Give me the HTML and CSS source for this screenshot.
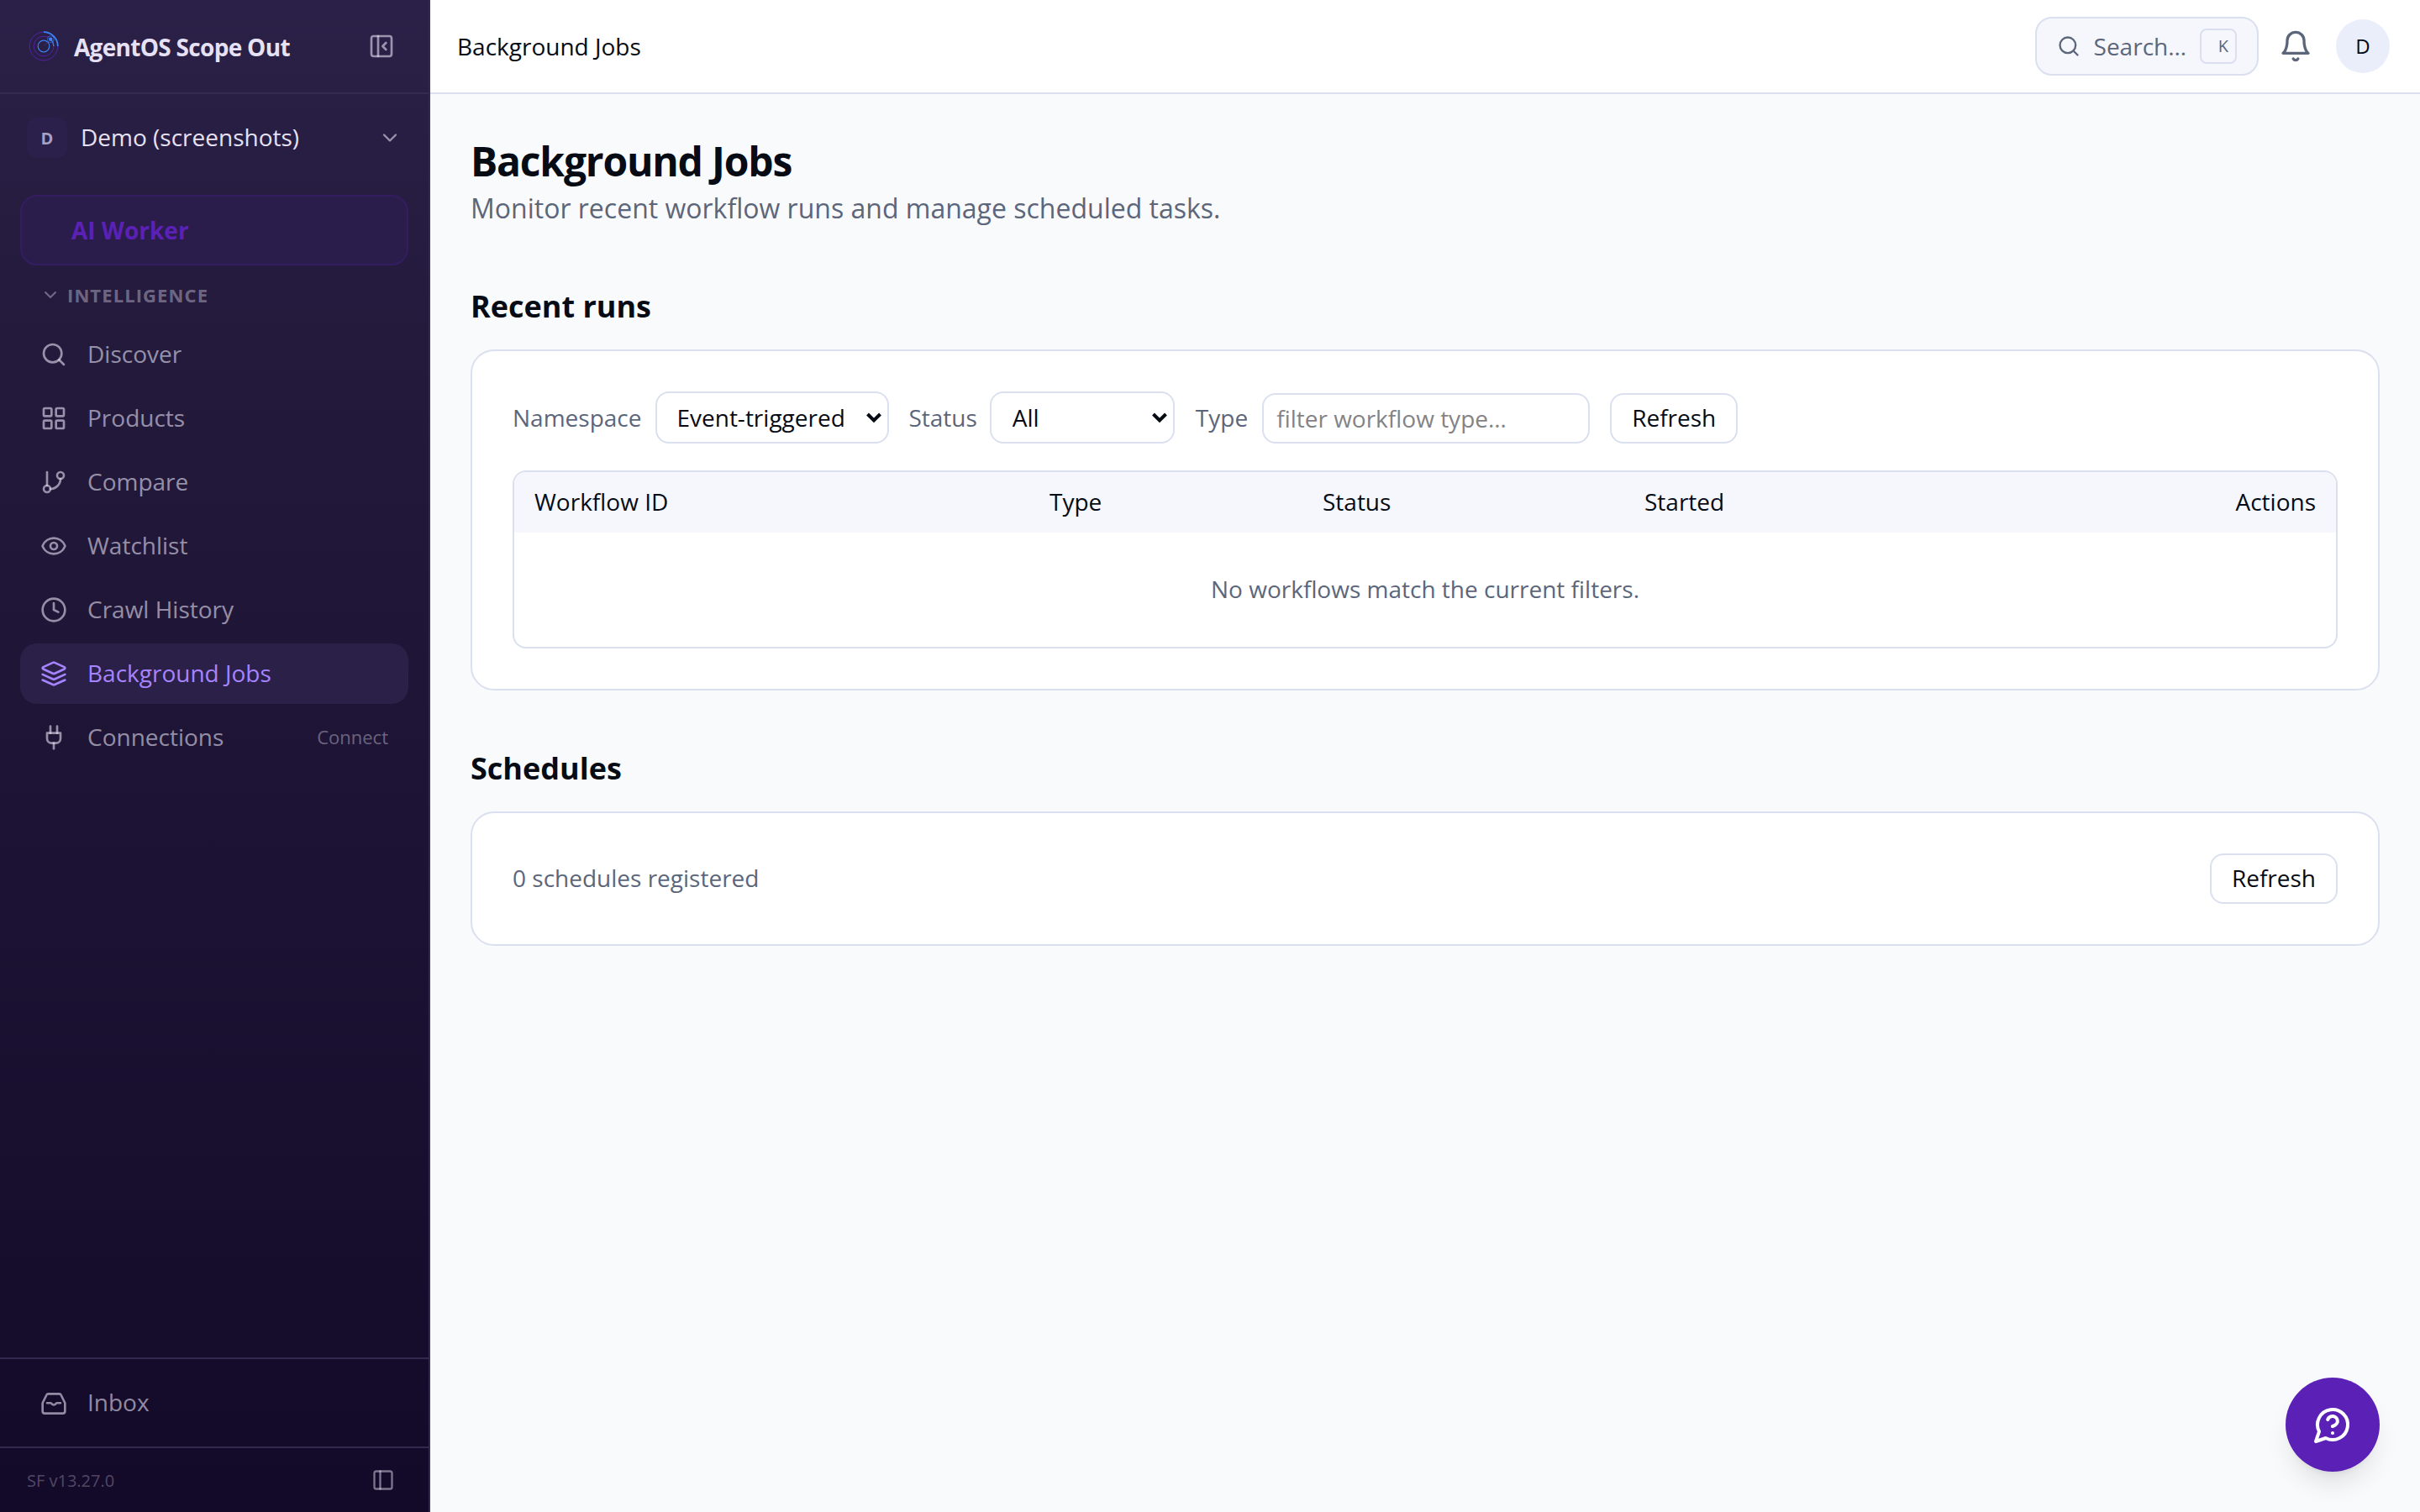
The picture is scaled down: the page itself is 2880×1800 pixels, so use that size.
FILE: index.html
```html
<!DOCTYPE html>
<html lang="en">
<head>
    <meta charset="UTF-8">
    <meta name="viewport" content="width=device-width, initial-scale=1.0">
    <title>Background Jobs</title>
    <link rel="stylesheet" href="styles.css">
</head>
<body>
    <aside class="sidebar">
        <div class="brand">
            <svg class="brand-logo" viewBox="0 0 40 40" fill="none">
                <circle cx="20" cy="20" r="16.8" stroke="#5b21b6" stroke-opacity=".85" />
                <circle cx="20" cy="20" r="11.8" stroke="#5b21b6" stroke-opacity=".85" />
                <circle cx="20" cy="20" r="6.8" stroke="#3b82f6" stroke-width="1.2" />
                <path d="M20 3.2A16.8 16.8 0 0 1 36.8 20" stroke="#3b82f6" stroke-width="1.8" />
                <path d="M28.3 11.7A11.8 11.8 0 0 1 31.8 20" stroke="#3b82f6" stroke-width="1.2" />
                <path d="M21 19l5-5" stroke="#5b21b6" stroke-dasharray="2 1" />
                <circle cx="28.3" cy="11.7" r="4" stroke="#3b82f6" stroke-opacity=".6" />
                <circle cx="28.3" cy="11.7" r="2.2" fill="#3b82f6" />
            </svg>
            <span class="brand-name">AgentOS Scope Out</span>
            <svg class="icon brand-toggle" viewBox="0 0 24 24"><rect x="3" y="3" width="18" height="18" rx="2" /><path d="M9 3v18" /><path d="m16 15-3-3 3-3" /></svg>
        </div>

        <div class="team">
            <span class="team-badge">D</span>
            <span class="team-name">Demo (screenshots)</span>
            <svg class="icon icon-sm" viewBox="0 0 24 24"><path d="m6 9 6 6 6-6" /></svg>
        </div>

        <a class="worker">AI Worker</a>

        <div class="section-title">
            <svg class="icon" viewBox="0 0 24 24"><path d="m6 9 6 6 6-6" /></svg>
            <span>INTELLIGENCE</span>
        </div>

        <nav class="nav">
            <a class="nav-item">
                <svg class="icon" viewBox="0 0 24 24"><circle cx="11" cy="11" r="8" /><path d="m21 21-4.3-4.3" /></svg>
                <span>Discover</span>
            </a>
            <a class="nav-item">
                <svg class="icon" viewBox="0 0 24 24"><rect x="3" y="3" width="7" height="7" rx="1" /><rect x="14" y="3" width="7" height="7" rx="1" /><rect x="14" y="14" width="7" height="7" rx="1" /><rect x="3" y="14" width="7" height="7" rx="1" /></svg>
                <span>Products</span>
            </a>
            <a class="nav-item">
                <svg class="icon" viewBox="0 0 24 24"><path d="M6 3v12" /><circle cx="18" cy="6" r="3" /><circle cx="6" cy="18" r="3" /><path d="M18 9a9 9 0 0 1-9 9" /></svg>
                <span>Compare</span>
            </a>
            <a class="nav-item">
                <svg class="icon" viewBox="0 0 24 24"><path d="M2.062 12.348a1 1 0 0 1 0-.696 10.75 10.75 0 0 1 19.876 0 1 1 0 0 1 0 .696 10.75 10.75 0 0 1-19.876 0" /><circle cx="12" cy="12" r="3" /></svg>
                <span>Watchlist</span>
            </a>
            <a class="nav-item">
                <svg class="icon" viewBox="0 0 24 24"><circle cx="12" cy="12" r="10" /><path d="M12 6v6l4 2" /></svg>
                <span>Crawl History</span>
            </a>
            <a class="nav-item active">
                <svg class="icon" viewBox="0 0 24 24"><path d="m12.83 2.18a2 2 0 0 0-1.66 0L2.6 6.08a1 1 0 0 0 0 1.83l8.58 3.91a2 2 0 0 0 1.66 0l8.58-3.9a1 1 0 0 0 0-1.83Z" /><path d="m22 17.65-9.17 4.16a2 2 0 0 1-1.66 0L2 17.65" /><path d="m22 12.65-9.17 4.16a2 2 0 0 1-1.66 0L2 12.65" /></svg>
                <span>Background Jobs</span>
            </a>
            <a class="nav-item">
                <svg class="icon" viewBox="0 0 24 24"><path d="M12 22v-5" /><path d="M9 8V2" /><path d="M15 8V2" /><path d="M18 8v5a4 4 0 0 1-4 4h-4a4 4 0 0 1-4-4V8Z" /></svg>
                <span>Connections</span>
                <span class="nav-hint">Connect</span>
            </a>
        </nav>

        <div class="inbox">
            <a class="nav-item">
                <svg class="icon" viewBox="0 0 24 24"><path d="M7 4h10a1.5 1.5 0 0 1 1.4.9L22 12.2v7.3a2 2 0 0 1-2 2H4a2 2 0 0 1-2-2v-7.3L5.6 4.9A1.5 1.5 0 0 1 7 4Z" /><path d="M6 12.2h3.200c.6 0 .8.3 1.100.8.400.6.900.9 1.700.9s1.300-.3 1.700-.9c.3-.5.500-.8 1.100-.8H18" /></svg>
                <span>Inbox</span>
            </a>
        </div>

        <div class="sidebar-footer">
            <span>SF v13.27.0</span>
            <svg class="icon icon-sm" viewBox="0 0 24 24"><rect x="3" y="3" width="18" height="18" rx="2" /><path d="M9 3v18" /></svg>
        </div>
    </aside>

    <div class="page">
        <header class="topbar">
            <span class="topbar-title">Background Jobs</span>
            <div class="search">
                <svg class="icon icon-sm" viewBox="0 0 24 24"><circle cx="11" cy="11" r="8" /><path d="m21 21-4.3-4.3" /></svg>
                <span>Search…</span>
                <kbd>K</kbd>
            </div>
            <svg class="icon bell" viewBox="0 0 24 24"><path d="M6 8a6 6 0 0 1 12 0c0 7 3 9 3 9H3s3-2 3-9" /><path d="M10.3 21a1.94 1.94 0 0 0 3.4 0" /></svg>
            <span class="avatar">D</span>
        </header>

        <main class="content">
            <h1>Background Jobs</h1>
            <p class="subtitle">Monitor recent workflow runs and manage scheduled tasks.</p>

            <h2>Recent runs</h2>
            <section class="card">
                <form class="filters">
                    <label for="namespace" class="label-namespace">Namespace</label>
                    <div class="select select-namespace">
                        <select id="namespace"><option>Event-triggered</option></select>
                        <svg viewBox="0 0 20 14"><path d="M2.5 3 10 10.5 17.5 3" /></svg>
                    </div>
                    <label for="status" class="label-status">Status</label>
                    <div class="select select-status">
                        <select id="status"><option>All</option></select>
                        <svg viewBox="0 0 20 14"><path d="M2.5 3 10 10.5 17.5 3" /></svg>
                    </div>
                    <label for="type">Type</label>
                    <input type="text" id="type" placeholder="filter workflow type…">
                    <button type="button" class="btn">Refresh</button>
                </form>

                <div class="table-wrap">
                    <table>
                        <thead>
                            <tr>
                                <th class="col-id">Workflow ID</th>
                                <th class="col-type">Type</th>
                                <th class="col-status">Status</th>
                                <th class="col-started">Started</th>
                                <th class="col-actions">Actions</th>
                            </tr>
                        </thead>
                        <tbody>
                            <tr>
                                <td colspan="5">No workflows match the current filters.</td>
                            </tr>
                        </tbody>
                    </table>
                </div>
            </section>

            <h2>Schedules</h2>
            <section class="card schedules">
                <span>0 schedules registered</span>
                <button type="button" class="btn">Refresh</button>
            </section>
        </main>
    </div>

    <button type="button" class="help">
        <svg class="icon" viewBox="0 0 24 24"><path d="M7.9 20A9 9 0 1 0 4 16.1L2 22Z" /><path d="M9.09 9a3 3 0 0 1 5.83 1c0 2-3 3-3 3" /><path d="M12 17h.01" /></svg>
    </button>
</body>
</html>
```
FILE: styles.css
```css
* {
    box-sizing: border-box;
}

body {
    margin: 0;
    height: 1800px;
    display: flex;
    font-family: "Open Sans", sans-serif;
    font-size: 28px;
    line-height: 40px;
    color: #060b14;
    background-color: #f9fafc;
    overflow: hidden;
}

.icon {
    width: 32px;
    height: 32px;
    flex-shrink: 0;
    fill: none;
    stroke: currentColor;
    stroke-width: 2;
    stroke-linecap: round;
    stroke-linejoin: round;
}

.icon-sm {
    width: 28px;
    height: 28px;
}

/* Sidebar */
.sidebar {
    width: 512px;
    flex-shrink: 0;
    display: flex;
    flex-direction: column;
    border-right: 2px solid #33294f;
    background: linear-gradient(180deg, #2b2148 0%, #231a3c 22%, #1e1435 50%, #130929 100%);
    color: rgba(230, 225, 244, 0.6);
}

.brand {
    height: 112px;
    padding: 0 40px 0 32px;
    display: flex;
    align-items: center;
    gap: 16px;
    border-bottom: 2px solid #342b50;
}

.brand-logo {
    width: 40px;
    height: 40px;
}

.brand-name {
    flex: 1;
    padding-top: 1px;
    font-weight: 700;
    letter-spacing: -0.025em;
    color: #e6e1f4;
}

.team {
    height: 104px;
    padding: 0 32px;
    display: flex;
    align-items: center;
    gap: 16px;
}

.team-badge {
    width: 48px;
    height: 48px;
    border-radius: 12px;
    background-color: #2b1f4b;
    font-size: 20px;
    font-weight: 700;
    line-height: 49px;
    text-align: center;
    color: #a8a1bf;
}

.team-name {
    flex: 1;
    padding-bottom: 2px;
    color: #e6e1f4;
}

.worker {
    height: 84px;
    margin: 16px 24px 0;
    padding-left: 59px;
    border: 2px solid #331d60;
    border-radius: 20px;
    background-color: #2b1d4b;
    font-weight: 700;
    line-height: 80px;
    color: #5b21b6;
}

.section-title {
    height: 70px;
    padding-left: 48px;
    display: flex;
    align-items: center;
    gap: 8px;
    font-size: 22px;
    font-weight: 700;
    letter-spacing: 0.05em;
    color: rgba(230, 225, 244, 0.4);
}

.section-title .icon {
    width: 24px;
    height: 24px;
}

.nav {
    flex: 1;
    padding: 0 24px;
    display: flex;
    flex-direction: column;
    gap: 4px;
}

.nav-item {
    height: 72px;
    padding: 0 24px;
    display: flex;
    align-items: center;
    gap: 24px;
    border-radius: 20px;
}

.nav-item span {
    padding-bottom: 2px;
}

.nav-item.active {
    background-color: #2b2048;
    color: #a684ff;
}

.nav-hint {
    margin-left: auto;
    font-size: 22px;
    color: rgba(230, 225, 244, 0.4);
}

.inbox {
    padding: 16px 24px;
    border-top: 2px solid #33294f;
}

.sidebar-footer {
    height: 78px;
    padding: 0 40px 0 32px;
    display: flex;
    align-items: center;
    justify-content: space-between;
    border-top: 2px solid #33294f;
    font-size: 20px;
    color: rgba(230, 225, 244, 0.3);
}

.sidebar-footer span {
    padding-top: 2px;
}

.sidebar-footer .icon {
    color: rgba(230, 225, 244, 0.5);
}

/* Top bar */
.page {
    flex: 1;
}

.topbar {
    height: 112px;
    padding: 0 36px 0 32px;
    display: flex;
    align-items: center;
    border-bottom: 2px solid #dae0ef;
    background-color: #fff;
}

.topbar-title {
    flex: 1;
}

.search {
    height: 70px;
    padding: 0 24px;
    display: flex;
    align-items: center;
    gap: 16px;
    border: 2px solid #dae0ef;
    border-radius: 20px;
    background-color: #f5f7fc;
    color: #5c667b;
}

.search kbd {
    width: 44px;
    height: 42px;
    padding-right: 8px;
    border: 2px solid #dae0ef;
    border-radius: 8px;
    font-family: inherit;
    font-size: 20px;
    line-height: 38px;
    text-align: right;
}

.bell {
    width: 40px;
    height: 40px;
    margin: 0 28px 0 24px;
    color: #5c667b;
}

.avatar {
    width: 64px;
    height: 64px;
    border-radius: 50%;
    background-color: #eaeefa;
    font-size: 24px;
    line-height: 64px;
    text-align: center;
}

/* Content */
.content {
    padding: 48px;
}

h1 {
    margin: 0;
    font-size: 48px;
    line-height: 64px;
    letter-spacing: -0.025em;
}

.subtitle {
    margin: 0;
    font-size: 32px;
    line-height: 48px;
    color: #5c667b;
}

h2 {
    margin: 65px 0 23px;
    font-size: 36px;
    line-height: 56px;
}

.card {
    padding: 48px;
    border: 2px solid #dae0ef;
    border-radius: 28px;
    background-color: #fff;
}

.filters {
    display: flex;
    align-items: flex-end;
    margin-bottom: 32px;
    color: #5c667b;
}

.filters label {
    margin-right: 17px;
    line-height: 62px;
}

.filters .label-status {
    margin-right: 15px;
}

.select {
    position: relative;
}

.select-namespace {
    width: 278px;
    margin-right: 23px;
}

.select-status {
    width: 220px;
    margin-right: 25px;
}

.select svg {
    position: absolute;
    right: 8px;
    top: 24px;
    width: 20px;
    height: 14px;
    fill: none;
    stroke: #060b14;
    stroke-width: 4;
}

select,
input,
.btn {
    margin: 0;
    border: 2px solid #dae0ef;
    border-radius: 16px;
    background-color: #fff;
    font-family: inherit;
    font-size: 28px;
    color: #060b14;
}

select {
    display: block;
    width: 100%;
    height: 62px;
    padding: 0 23px;
    appearance: none;
}

.select-status select {
    padding-left: 25px;
}

input {
    width: 390px;
    height: 60px;
    margin-right: 24px;
    padding: 0 15px 1px;
}

input::placeholder {
    color: #838387;
}

.btn {
    height: 60px;
    padding: 0 24px 2px;
}

.table-wrap {
    border: 2px solid #dae0ef;
    border-radius: 16px;
    overflow: hidden;
}

table {
    width: 100%;
    border-collapse: collapse;
    table-layout: fixed;
}

th {
    height: 72px;
    padding: 0 24px 2px;
    background-color: #f5f7fc;
    font-weight: 400;
    text-align: left;
}

.col-id {
    width: 613px;
}

.col-type {
    width: 325px;
}

.col-status {
    width: 383px;
}

.col-actions {
    text-align: right;
}

td {
    height: 136px;
    padding: 0 24px 2px;
    text-align: center;
    color: #5c667b;
}

.schedules {
    display: flex;
    align-items: center;
    justify-content: space-between;
    height: 160px;
    color: #5c667b;
}

.schedules span {
    padding-bottom: 2px;
}

/* Floating help button */
.help {
    position: fixed;
    right: 48px;
    bottom: 48px;
    width: 112px;
    height: 112px;
    padding: 0;
    display: flex;
    align-items: center;
    justify-content: center;
    border: 0;
    border-radius: 50%;
    background-color: #5b21b6;
    color: #fff;
    box-shadow: 0 20px 30px -6px rgba(0, 0, 0, 0.1), 0 8px 12px -8px rgba(0, 0, 0, 0.1);
}

.help .icon {
    width: 48px;
    height: 48px;
}
```
